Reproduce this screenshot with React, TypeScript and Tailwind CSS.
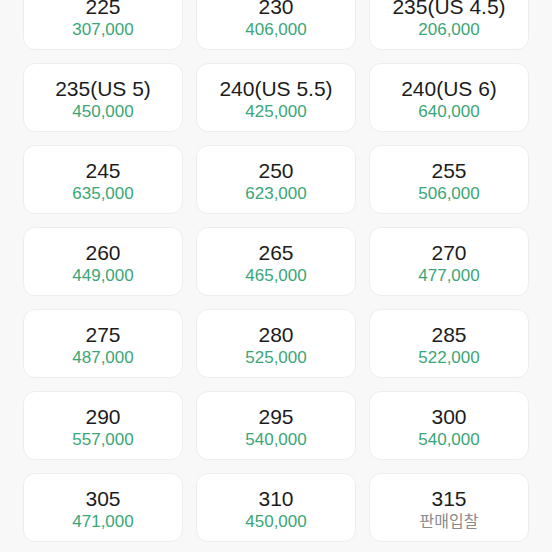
const SIZES: { label: string; price?: string }[] = [
  { label: "225", price: "307,000" },
  { label: "230", price: "406,000" },
  { label: "235(US 4.5)", price: "206,000" },
  { label: "235(US 5)", price: "450,000" },
  { label: "240(US 5.5)", price: "425,000" },
  { label: "240(US 6)", price: "640,000" },
  { label: "245", price: "635,000" },
  { label: "250", price: "623,000" },
  { label: "255", price: "506,000" },
  { label: "260", price: "449,000" },
  { label: "265", price: "465,000" },
  { label: "270", price: "477,000" },
  { label: "275", price: "487,000" },
  { label: "280", price: "525,000" },
  { label: "285", price: "522,000" },
  { label: "290", price: "557,000" },
  { label: "295", price: "540,000" },
  { label: "300", price: "540,000" },
  { label: "305", price: "471,000" },
  { label: "310", price: "450,000" },
  { label: "315" },
];

export default function App() {
  return (
    <div
      className="h-[552px] w-[552px] overflow-hidden bg-[#f8f8f8]"
      style={{ fontFamily: '"Liberation Sans", "Noto Sans CJK KR", sans-serif' }}
    >
      <div className="mt-[-19px] grid grid-cols-3 gap-x-[13px] gap-y-[13px] px-[23px]">
        {SIZES.map((s) => (
          <div
            key={s.label}
            className="flex h-[69px] flex-col items-center justify-center rounded-[12px] border border-[#ededed] bg-white pt-[3px]"
          >
            <span className="text-[21px] leading-[24px] text-[#1c1c1c]">{s.label}</span>
            {s.price ? (
              <span className="text-[17px] leading-[21px] text-[#3aa676]">{s.price}</span>
            ) : (
              <span className="text-[16px] leading-[21px] text-[#8a8a8a]">판매입찰</span>
            )}
          </div>
        ))}
      </div>
    </div>
  );
}
